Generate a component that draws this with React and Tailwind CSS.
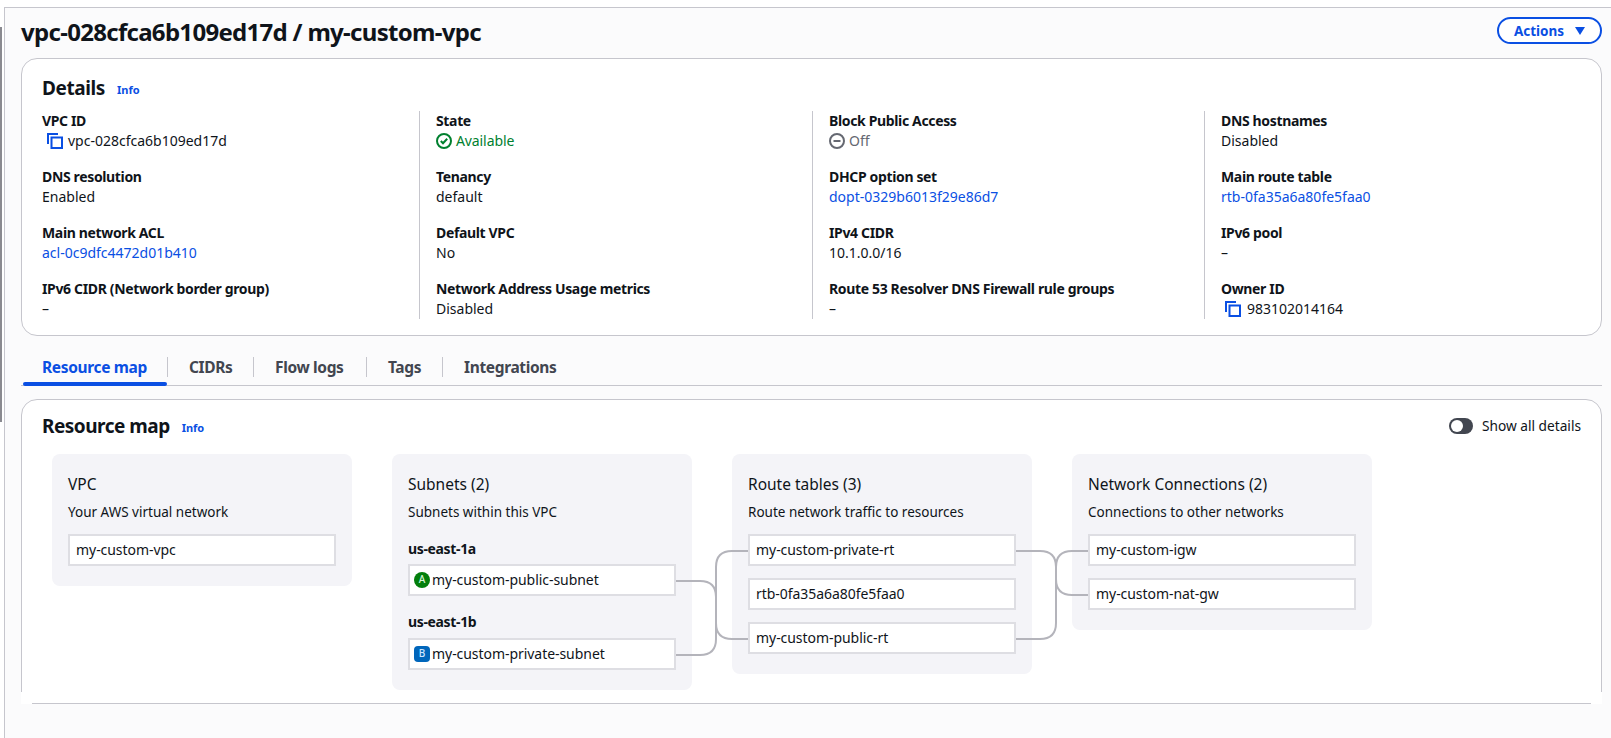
const link = "text-[#0a4fe3]";

function CopyIcon() {
  return (
    <svg width="16" height="16" viewBox="0 0 16 16" fill="none" stroke="#0a4fe3" strokeWidth="2" className="shrink-0">
      <path d="M1 11V1h10" />
      <rect x="4.5" y="4.5" width="10.5" height="10.5" />
    </svg>
  );
}

function CheckIcon() {
  return (
    <svg width="16" height="16" viewBox="0 0 16 16" fill="none" stroke="#00802f" strokeWidth="2" className="shrink-0">
      <circle cx="8" cy="8" r="7" />
      <path d="M4.8 8l2.2 2.2 4.2-4.4" />
    </svg>
  );
}

function OffIcon() {
  return (
    <svg width="16" height="16" viewBox="0 0 16 16" fill="none" stroke="#656871" strokeWidth="2" className="shrink-0">
      <circle cx="8" cy="8" r="7" />
      <path d="M4.5 8h7" />
    </svg>
  );
}

function Field({ label, children }) {
  return (
    <div className="h-10">
      <div className="h-5 text-[14px] leading-5 font-bold tracking-[-0.35px] text-[#0f141a]">{label}</div>
      <div className="h-5 flex items-center text-[14px] leading-5 text-[#0f141a]">{children}</div>
    </div>
  );
}

function Column({ first, children }) {
  return (
    <div className={first ? "flex flex-col gap-4 pr-4" : "flex flex-col gap-4 pl-4 border-l border-[#c6c6cd]"}>
      {children}
    </div>
  );
}

function Node({ children, className = "" }) {
  return (
    <div className={"h-8 w-full border-2 border-[#dedee3] bg-white flex items-center px-1.5 pb-[1px] text-[14px] tracking-[-0.05px] text-[#0f141a] " + className}>
      {children}
    </div>
  );
}

function Panel({ title, sub, children, className = "" }) {
  return (
    <div className={"rounded-lg bg-[#f4f4f8] px-4 pt-5 pb-5 w-[300px] shrink-0 " + className}>
      <div className="text-[15.5px] leading-5 text-[#0f141a]">{title}</div>
      <div className="mt-[8px] mb-[12px] text-[13.5px] leading-5 text-[#0f141a]">{sub}</div>
      {children}
    </div>
  );
}

function Tab({ children, active, cls }) {
  return (
    <div className={"h-5 flex items-center " + cls}>
      <span className={"mt-[2px] text-[15.5px] font-bold tracking-[-0.35px] " + (active ? "text-[#0a4fe3]" : "text-[#424650]")}>{children}</span>
    </div>
  );
}

function Connectors() {
  return (
    <svg className="absolute left-0 top-0 pointer-events-none" width="1400" height="300" viewBox="0 0 1400 300" fill="none" stroke="#b4b4bb" strokeWidth="2">
      <g transform="translate(-52 -454)">
        <path d="M676 581H700Q716 581 716 597V639Q716 655 700 655H676" />
        <path d="M748 551H732Q716 551 716 567V623Q716 639 732 639H748" />
        <path d="M1016 551H1040Q1056 551 1056 567V623Q1056 639 1040 639H1016" />
        <path d="M1088 551H1072Q1056 551 1056 567V579Q1056 595 1072 595H1088" />
      </g>
    </svg>
  );
}

export default function App() {
  return (
    <div className="relative h-[738px] w-[1611px] overflow-hidden bg-white font-['Noto_Sans','Open_Sans',sans-serif] text-[#0f141a]">
      <div className="absolute left-0 top-[27px] h-[395px] w-[1.5px] bg-[#8a8a90]" />
      <div className="ml-[4px] mt-[7px] h-[731px] border-l border-t border-[#c6c6cd] bg-[#fbfbfc] pl-[16px] pr-[9px]">
        <div className="flex h-[50px] items-start justify-between">
          <h1 className="mt-[8px] text-[24px] font-bold leading-8 tracking-[-0.7px] text-[#0f141a]">vpc-028cfca6b109ed17d / my-custom-vpc</h1>
          <button className={"mt-[9px] flex h-[27px] w-[105px] items-center justify-center gap-[11px] rounded-full border-2 border-[#0a4fe3] bg-white pt-[1px] text-[13.5px] font-bold " + link}>
            Actions
            <svg width="10" height="8" viewBox="0 0 10 8" fill="#0a4fe3"><path d="M0 0h10L5 8z" /></svg>
          </button>
        </div>

        <section className="h-[278px] rounded-2xl border border-[#c6c6cd] bg-white px-5 pt-[17px]">
          <div className="flex h-[35px] items-start">
            <h2 className="text-[19px] font-bold leading-6 tracking-[-0.4px]">Details</h2>
            <span className={"ml-[12px] mt-[6px] text-[11px] font-bold leading-4 " + link}>Info</span>
          </div>
          <div className="grid grid-cols-[377px_393px_392px_1fr]">
            <Column first>
              <Field label="VPC ID">
                <span className="ml-[5px] mr-[5px]"><CopyIcon /></span>vpc-028cfca6b109ed17d
              </Field>
              <Field label="DNS resolution">Enabled</Field>
              <Field label="Main network ACL"><span className={link}>acl-0c9dfc4472d01b410</span></Field>
              <Field label="IPv6 CIDR (Network border group)">–</Field>
            </Column>
            <Column>
              <Field label="State">
                <CheckIcon /><span className="ml-1 text-[#00802f] tracking-[-0.1px]">Available</span>
              </Field>
              <Field label="Tenancy">default</Field>
              <Field label="Default VPC">No</Field>
              <Field label="Network Address Usage metrics">Disabled</Field>
            </Column>
            <Column>
              <Field label="Block Public Access">
                <OffIcon /><span className="ml-1 text-[#656871]">Off</span>
              </Field>
              <Field label="DHCP option set"><span className={link}>dopt-0329b6013f29e86d7</span></Field>
              <Field label="IPv4 CIDR">10.1.0.0/16</Field>
              <Field label="Route 53 Resolver DNS Firewall rule groups">–</Field>
            </Column>
            <Column>
              <Field label="DNS hostnames">Disabled</Field>
              <Field label="Main route table"><span className={link}>rtb-0fa35a6a80fe5faa0</span></Field>
              <Field label="IPv6 pool">–</Field>
              <Field label="Owner ID">
                <span className="ml-[4px] mr-[6px]"><CopyIcon /></span>983102014164
              </Field>
            </Column>
          </div>
        </section>

        <nav className="relative mt-[9px] h-[41px] border-b border-[#c6c6cd] pt-[12px]">
          <div className="flex">
            <Tab active cls="w-[147px] pl-[21px] border-r border-[#c6c6cd]">Resource map</Tab>
            <Tab cls="w-[86px] pl-[21px] border-r border-[#c6c6cd]">CIDRs</Tab>
            <Tab cls="w-[113px] pl-[21px] border-r border-[#c6c6cd]">Flow logs</Tab>
            <Tab cls="w-[76px] pl-[21px] border-r border-[#c6c6cd]">Tags</Tab>
            <Tab cls="pl-[21px]">Integrations</Tab>
          </div>
          <div className="absolute bottom-[-1px] left-[2px] h-[4px] w-[144px] rounded-sm bg-[#0a4fe3]" />
        </nav>

        <section className="relative mt-[13px] h-[305px] rounded-t-2xl border border-[#c6c6cd] bg-white pl-5 pr-5 pt-[14px]">
          <div className="absolute -bottom-px -left-px h-[12px] w-[11px] bg-white" />
          <div className="absolute -bottom-px -right-px h-[12px] w-[11px] bg-white" />
          <div className="flex h-[40px] items-start justify-between">
            <div className="flex items-start">
              <h2 className="text-[19px] font-bold leading-6 tracking-[-0.5px]">Resource map</h2>
              <span className={"ml-[12px] mt-[6px] text-[11px] font-bold leading-4 " + link}>Info</span>
            </div>
            <div className="flex items-center gap-[9px] pt-[2px]">
              <div className="flex h-4 w-6 items-center rounded-full bg-[#424650] pl-[2px]">
                <div className="h-3 w-3 rounded-full bg-white" />
              </div>
              <span className="text-[13.7px] leading-5">Show all details</span>
            </div>
          </div>
          <div className="relative ml-[10px] flex items-start gap-10">
            <Panel title="VPC" sub="Your AWS virtual network" className="h-[132px]">
              <Node>my-custom-vpc</Node>
            </Panel>
            <Panel title="Subnets (2)" sub="Subnets within this VPC" className="h-[236px]">
              <div className="mt-[17px] mb-[5px] text-[14px] font-bold leading-5 tracking-[-0.35px]">us-east-1a</div>
              <Node className="gap-[2px] !px-[4px]">
                <span className="flex h-4 w-4 shrink-0 items-center justify-center rounded-full bg-[#037f0c] text-[10px] font-medium text-[#d5f5d8]">A</span>
                my-custom-public-subnet
              </Node>
              <div className="mt-[16px] mb-[6px] text-[14px] font-bold leading-5 tracking-[-0.35px]">us-east-1b</div>
              <Node className="gap-[2px] !px-[4px]">
                <span className="flex h-4 w-4 shrink-0 items-center justify-center rounded-sm bg-[#0066bb] text-[10px] font-medium text-[#cfe6ff]">B</span>
                my-custom-private-subnet
              </Node>
            </Panel>
            <Panel title="Route tables (3)" sub="Route network traffic to resources" className="h-[220px]">
              <div className="flex flex-col gap-3">
                <Node>my-custom-private-rt</Node>
                <Node>rtb-0fa35a6a80fe5faa0</Node>
                <Node>my-custom-public-rt</Node>
              </div>
            </Panel>
            <Panel title="Network Connections (2)" sub="Connections to other networks" className="h-[176px]">
              <div className="flex flex-col gap-3">
                <Node>my-custom-igw</Node>
                <Node>my-custom-nat-gw</Node>
              </div>
            </Panel>
            <Connectors />
          </div>
        </section>
      </div>
    </div>
  );
}
